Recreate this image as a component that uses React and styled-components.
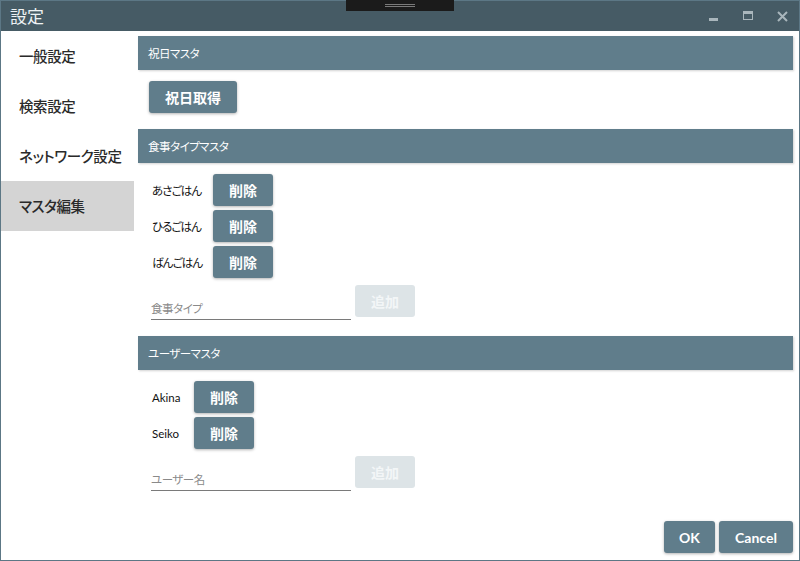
import React from "react";
import styled, { createGlobalStyle } from "styled-components";

const Global = createGlobalStyle`
  html, body { margin: 0; padding: 0; background: #fff; }
  * { box-sizing: border-box; }
  body {
    font-family: Lato, "Noto Sans CJK JP", sans-serif;
    font-feature-settings: "palt";
  }
`;

const FONT = `Lato, "Noto Sans CJK JP", sans-serif`;

const Window = styled.div`
  position: relative;
  width: 800px;
  height: 561px;
  border: 1px solid #5c7785;
  display: flex;
  flex-direction: column;
  background: #fff;
  font-family: ${FONT};
  font-feature-settings: "palt";
`;

const TitleBar = styled.div`
  height: 30px;
  background: #465b65;
  display: flex;
  align-items: center;
  padding-left: 9px;
  flex-shrink: 0;
`;

const Title = styled.div`
  color: #eef2f4;
  font-size: 17px;
  font-family: "Noto Sans CJK JP", sans-serif;
  flex: 1;
  margin-top: -1px;
`;

const Notch = styled.div`
  position: absolute;
  left: 345px;
  top: -1px;
  width: 108px;
  height: 11px;
  background: #1b1b1b;
  display: flex;
  flex-direction: column;
  align-items: center;
  padding-top: 4px;
  gap: 1px;
`;

const NotchLine = styled.div`
  width: 30px;
  height: 1px;
  background: #7a7a7a;
`;

const Controls = styled.div`
  display: flex;
  align-items: center;
  height: 100%;
`;

const Ctrl = styled.div`
  width: 34px;
  height: 100%;
  display: flex;
  align-items: center;
  justify-content: center;
`;

const Body = styled.div`
  flex: 1;
  display: flex;
  min-height: 0;
`;

const Nav = styled.div`
  width: 133px;
  flex-shrink: 0;
  display: flex;
  flex-direction: column;
`;

const NavItem = styled.div`
  height: 50px;
  display: flex;
  align-items: center;
  padding-left: 18px;
  padding-bottom: 1px;
  font-size: 14.5px;
  letter-spacing: -0.4px;
  font-weight: 500;
  color: #2a2a2a;
  font-family: "Noto Sans CJK JP", sans-serif;
  background: ${(p) => (p.$active ? "#d4d4d4" : "transparent")};
`;

const Content = styled.div`
  flex: 1;
  display: flex;
  flex-direction: column;
  padding: 5px 6px 7px 4px;
`;

const SectionHeader = styled.div`
  height: 34px;
  background: #607d8b;
  color: #fff;
  font-size: 11.5px;
  letter-spacing: -0.5px;
  display: flex;
  align-items: center;
  padding-left: 10px;
  font-family: "Noto Sans CJK JP", sans-serif;
  box-shadow: 1px 1px 2px rgba(0, 0, 0, 0.18);
`;

const SectionBody = styled.div`
  display: flex;
  flex-direction: column;
  gap: 4px;
  padding: 11px 0 ${(p) => p.$pb}px ${(p) => p.$pl || 13}px;
`;

const Button = styled.button`
  height: 32px;
  min-width: ${(p) => p.$w || 60}px;
  padding: 0 ${(p) => p.$px || 12}px;
  border: none;
  border-radius: 3px;
  background: ${(p) => (p.$disabled ? "#dde4e7" : "#607d8b")};
  color: ${(p) => (p.$disabled ? "#f3f6f7" : "#fff")};
  font-size: 14px;
  font-weight: 700;
  font-family: ${FONT};
  box-shadow: ${(p) => (p.$disabled ? "none" : "0 1px 3px rgba(0,0,0,0.3)")};
  cursor: pointer;
  display: flex;
  align-items: center;
  justify-content: center;
  flex-shrink: 0;
`;

const AddButton = styled(Button)`
  margin-bottom: 3px;
`;

const Row = styled.div`
  display: flex;
  align-items: center;
`;

const Label = styled.div`
  font-size: 11.5px;
  letter-spacing: ${(p) => (p.$latin ? "0" : "-0.9px")};
  color: #111;
  width: ${(p) => p.$w}px;
  padding-left: 1px;
`;

const InputRow = styled.div`
  display: flex;
  align-items: flex-end;
  gap: 4px;
  margin-top: 3px;
`;

const Input = styled.input`
  width: 200px;
  height: 28px;
  border: none;
  border-bottom: 1px solid #7a7a7a;
  outline: none;
  font-size: 11.5px;
  letter-spacing: -0.5px;
  font-family: ${FONT};
  font-feature-settings: "palt";
  padding: 6px 0 1px 0;
  background: transparent;
  &::placeholder { color: #8a8a8a; }
`;

const Footer = styled.div`
  margin-top: auto;
  display: flex;
  justify-content: flex-end;
  gap: 4px;
`;

const MinIcon = () => (
  <svg width="10" height="10" viewBox="0 0 10 10">
    <rect x="0" y="7" width="9" height="3" fill="#a9b6bc" />
  </svg>
);
const MaxIcon = () => (
  <svg width="10" height="10" viewBox="0 0 10 10">
    <rect x="0.5" y="0.5" width="9" height="8" fill="none" stroke="#a9b6bc" strokeWidth="1" />
    <rect x="0" y="0" width="10" height="3" fill="#a9b6bc" />
  </svg>
);
const CloseIcon = () => (
  <svg width="11" height="11" viewBox="0 0 11 11">
    <path d="M1 1 L10 10 M10 1 L1 10" stroke="#a9b6bc" strokeWidth="2" />
  </svg>
);

const meals = ["あさごはん", "ひるごはん", "ばんごはん"];
const users = ["Akina", "Seiko"];

export default function App() {
  return (
    <>
      <Global />
      <Window>
        <TitleBar>
          <Title>設定</Title>
          <Controls>
            <Ctrl><MinIcon /></Ctrl>
            <Ctrl><MaxIcon /></Ctrl>
            <Ctrl><CloseIcon /></Ctrl>
          </Controls>
        </TitleBar>
        <Notch>
          <NotchLine />
          <NotchLine />
        </Notch>
        <Body>
          <Nav>
            <NavItem>一般設定</NavItem>
            <NavItem>検索設定</NavItem>
            <NavItem>ネットワーク設定</NavItem>
            <NavItem $active>マスタ編集</NavItem>
          </Nav>
          <Content>
            <SectionHeader>祝日マスタ</SectionHeader>
            <SectionBody $pb={16} $pl={11}>
              <Row>
                <Button $w={88}>祝日取得</Button>
              </Row>
            </SectionBody>
            <SectionHeader>食事タイプマスタ</SectionHeader>
            <SectionBody $pb={16}>
              {meals.map((m) => (
                <Row key={m}>
                  <Label $w={62}>{m}</Label>
                  <Button>削除</Button>
                </Row>
              ))}
              <InputRow>
                <Input placeholder="食事タイプ" />
                <AddButton $disabled>追加</AddButton>
              </InputRow>
            </SectionBody>
            <SectionHeader>ユーザーマスタ</SectionHeader>
            <SectionBody $pb={0}>
              {users.map((u) => (
                <Row key={u}>
                  <Label $w={43} $latin>{u}</Label>
                  <Button>削除</Button>
                </Row>
              ))}
              <InputRow>
                <Input placeholder="ユーザー名" />
                <AddButton $disabled>追加</AddButton>
              </InputRow>
            </SectionBody>
            <Footer>
              <Button $w={51}>OK</Button>
              <Button $w={74}>Cancel</Button>
            </Footer>
          </Content>
        </Body>
      </Window>
    </>
  );
}
